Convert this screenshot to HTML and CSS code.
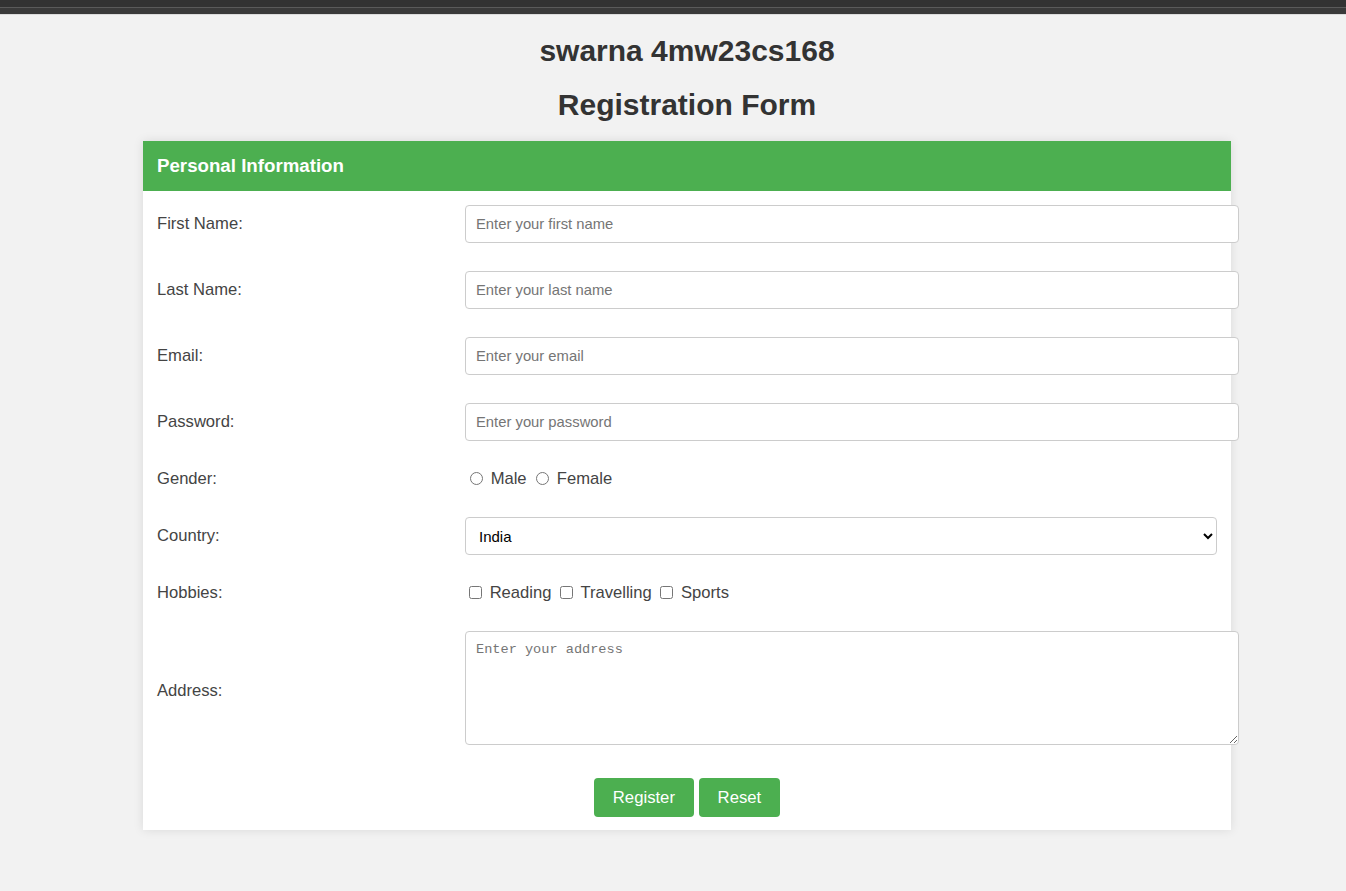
FILE: index.html
```html
<!DOCTYPE html>
<html lang="en">
<head>
<meta charset="utf-8">
<title>Registration Form</title>
<link rel="stylesheet" href="styles.css">
</head>
<body>
<div class="topbar"><div class="topbar-a"></div><div class="topbar-b"></div></div>
<main class="page">
  <h1 class="title">swarna 4mw23cs168</h1>
  <h2 class="title">Registration Form</h2>
  <form class="card">
    <table class="form-table">
      <colgroup><col class="col-label"><col class="col-field"></colgroup>
      <thead>
        <tr><th colspan="2" class="section">Personal Information</th></tr>
      </thead>
      <tbody>
        <tr>
          <td class="label">First Name:</td>
          <td><input class="text" type="text" placeholder="Enter your first name"></td>
        </tr>
        <tr>
          <td class="label">Last Name:</td>
          <td><input class="text" type="text" placeholder="Enter your last name"></td>
        </tr>
        <tr>
          <td class="label">Email:</td>
          <td><input class="text" type="email" placeholder="Enter your email"></td>
        </tr>
        <tr>
          <td class="label">Password:</td>
          <td><input class="text" type="password" placeholder="Enter your password"></td>
        </tr>
        <tr>
          <td class="label">Gender:</td>
          <td class="choices">
            <input type="radio" name="gender" id="male"> <label for="male">Male</label>
            <input type="radio" name="gender" id="female"> <label for="female">Female</label>
          </td>
        </tr>
        <tr>
          <td class="label">Country:</td>
          <td>
            <select class="select">
              <option>India</option>
              <option>USA</option>
              <option>UK</option>
            </select>
          </td>
        </tr>
        <tr>
          <td class="label">Hobbies:</td>
          <td class="choices">
            <input type="checkbox" id="h1"> <label for="h1">Reading</label>
            <input type="checkbox" id="h2"> <label for="h2">Travelling</label>
            <input type="checkbox" id="h3"> <label for="h3">Sports</label>
          </td>
        </tr>
        <tr>
          <td class="label">Address:</td>
          <td><textarea class="area" placeholder="Enter your address"></textarea></td>
        </tr>
        <tr>
          <td colspan="2" class="actions">
            <button type="submit" class="btn">Register</button>
            <button type="reset" class="btn">Reset</button>
          </td>
        </tr>
      </tbody>
    </table>
  </form>
</main>
</body>
</html>
```

FILE: styles.css
```css
html, body {
  margin: 0;
  padding: 0;
}
body {
  background: #f2f2f2;
  font-family: "Liberation Sans", Arial, sans-serif;
  color: #333;
  min-height: 891px;
}
.topbar {
  height: 14px;
  border-bottom: 1px solid #dcdcdc;
}
.topbar-a {
  height: 7px;
  background: #323232;
  border-bottom: 1px solid #5a5a5a;
}
.topbar-b {
  height: 6px;
  background: #3a3a3a;
}
.page {
  padding: 0 0 40px 28px;
}
.title {
  text-align: center;
  font-size: 30px;
  line-height: 35px;
  font-weight: bold;
  margin: 18px 0 19px;
  color: #333;
}
h2.title {
  margin-top: 19px;
}
.card {
  display: block;
  width: 1088px;
  margin: 0 auto;
  background: #fff;
  box-shadow: 0 0 10px rgba(0, 0, 0, 0.1);
}
.form-table {
  width: 100%;
  border-collapse: collapse;
  table-layout: fixed;
}
.col-label {
  width: 308px;
}
.section {
  background: #4caf50;
  color: #fff;
  text-align: left;
  font-size: 18.7px;
  line-height: 22px;
  padding: 14px;
  font-weight: bold;
}
td {
  padding: 14px;
  vertical-align: middle;
  font-size: 16.6px;
  line-height: 20px;
}
.label {
  color: #444;
}
.text {
  width: 100%;
  padding: 10px;
  border: 1px solid #ccc;
  border-radius: 4px;
  font-family: "Liberation Sans", Arial, sans-serif;
  font-size: 14.8px;
  line-height: 16px;
  height: 16px;
  display: block;
  margin: 0;
  color: #333;
}
.text::placeholder,
.area::placeholder {
  color: #757575;
}
.choices {
  color: #444;
  height: 20px;
}
.choices input[type="radio"] {
  margin: 0 3px 0 5px;
  vertical-align: -1px;
}
.choices input[type="checkbox"] {
  margin: 0 3px 0 4px;
  vertical-align: -1px;
}
.select {
  width: 100%;
  height: 38px;
  padding: 0 9px;
  border: 1px solid #ccc;
  border-radius: 4px;
  font-family: "Liberation Sans", Arial, sans-serif;
  font-size: 15px;
  color: #000;
  background: #fff;
  display: block;
}
.area {
  width: 100%;
  height: 92px;
  padding: 10px;
  border: 1px solid #ccc;
  border-radius: 4px;
  font-family: "Liberation Mono", "DejaVu Sans Mono", monospace;
  font-size: 13.6px;
  display: block;
  margin: 0 0 5px;
  resize: vertical;
}
.actions {
  text-align: center;
  padding: 14px 14px 13px;
}
.btn {
  background: #4caf50;
  color: #fff;
  border: none;
  border-radius: 4px;
  font-family: "Liberation Sans", Arial, sans-serif;
  font-size: 16.7px;
  line-height: 19px;
  padding: 10px 19px;
  cursor: pointer;
  margin: 0;
}
```
